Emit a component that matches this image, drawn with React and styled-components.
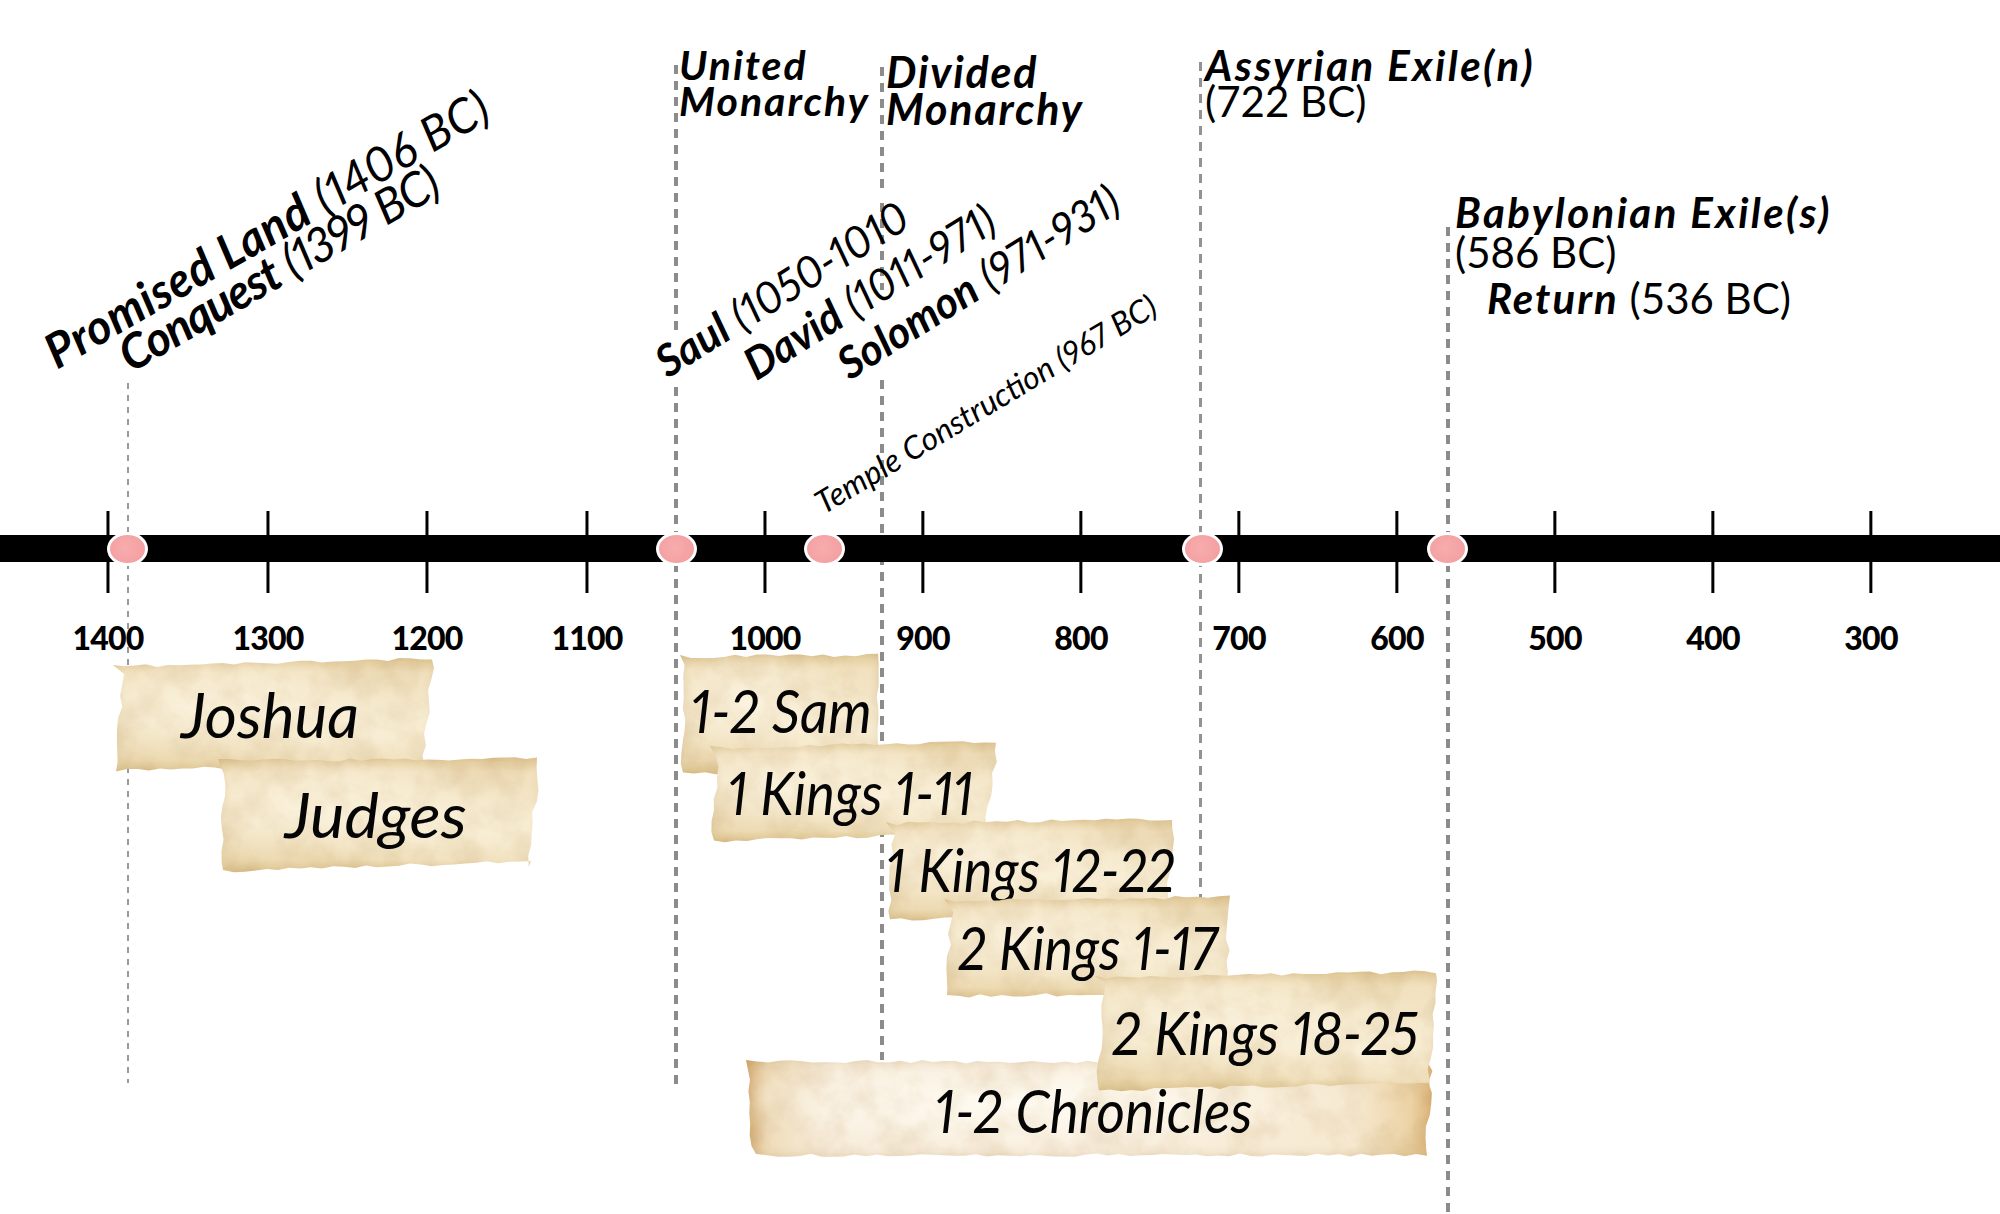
import React from "react";
import styled, { createGlobalStyle } from "styled-components";

const GlobalStyle = createGlobalStyle`
  html, body {
    margin: 0;
    padding: 0;
    background: #fff;
  }
  body {
    font-family: "Lato", "Open Sans", sans-serif;
    color: #000;
  }
`;

const Canvas = styled.div`
  position: relative;
  width: 2000px;
  height: 1214px;
  overflow: hidden;
  background: #fff;
`;

const Guide = styled.div`
  position: absolute;
  left: ${(p) => p.$x - p.$w / 2}px;
  top: ${(p) => p.$from}px;
  width: ${(p) => p.$w}px;
  height: ${(p) => p.$to - p.$from}px;
  background: repeating-linear-gradient(
    to bottom,
    ${(p) => p.$color} 0 ${(p) => p.$dash}px,
    transparent ${(p) => p.$dash}px ${(p) => p.$dash + p.$gap}px
  );
`;

const AxisBar = styled.div`
  position: absolute;
  left: 0;
  right: 0;
  top: 535px;
  height: 27px;
  background: #000;
`;

const Tick = styled.div`
  position: absolute;
  left: ${(p) => p.$x}px;
  top: 511px;
  transform: translateX(-50%);
  display: flex;
  flex-direction: column;
  align-items: center;
`;

const TickMark = styled.span`
  width: 3px;
  height: 82px;
  background: #000;
`;

const TickLabel = styled.span`
  margin-top: 29px;
  font-family: "Lato", sans-serif;
  font-weight: 900;
  font-size: 32px;
  line-height: 32px;
  letter-spacing: -0.8px;
`;

const EventDot = styled.span`
  position: absolute;
  left: ${(p) => p.$x - 20.5}px;
  top: 531.5px;
  width: 35px;
  height: 28px;
  border: 3px solid #fff;
  border-radius: 50%;
  background: radial-gradient(circle at 45% 45%, #f8acad, #f29c9e);
`;

const EraLabel = styled.div`
  position: absolute;
  left: ${(p) => p.$x}px;
  top: ${(p) => p.$y}px;
  font-family: "Lato", sans-serif;
  font-size: ${(p) => p.$size}px;
  line-height: ${(p) => p.$lh}px;
  white-space: nowrap;
`;

const EraLine = styled.div`
  padding-left: ${(p) => p.$indent || 0}px;
  margin-top: ${(p) => p.$gap || 0}px;
`;

const Strong = styled.span`
  font-weight: 700;
  font-style: italic;
  letter-spacing: ${(p) => p.$track ?? 2}px;
`;

const Plain = styled.span`
  font-weight: 400;
  font-style: normal;
`;

const DiagonalNote = styled.div`
  position: absolute;
  left: ${(p) => p.$x}px;
  top: ${(p) => p.$y}px;
  transform: rotate(${(p) => p.$angle}deg) scaleX(${(p) => p.$squeeze || 1});
  transform-origin: 0 0;
  font-family: "Lato", sans-serif;
  font-size: ${(p) => p.$size}px;
  line-height: ${(p) => p.$lh}px;
  font-variant-numeric: proportional-nums;
  white-space: nowrap;
`;

const NoteLine = styled.div`
  padding-left: ${(p) => p.$indent || 0}px;
  letter-spacing: ${(p) => p.$track || 0}px;
`;

const NoteName = styled.span`
  font-weight: 700;
  font-style: italic;
`;

const NoteDate = styled.span`
  font-weight: ${(p) => p.$weight || 400};
  font-style: italic;
`;

const Paper = styled.div`
  position: absolute;
  left: ${(p) => p.$x}px;
  top: ${(p) => p.$y}px;
  width: ${(p) => p.$w}px;
  height: ${(p) => p.$h}px;
  display: flex;
  align-items: center;
  justify-content: center;
`;

const Sheet = styled.div`
  position: absolute;
  inset: 0;
  clip-path: ${(p) => p.$clip};
  background: ${(p) =>
    p.$light
      ? `radial-gradient(ellipse at 40% 45%, rgba(255, 252, 244, 0.9), transparent 55%),
         linear-gradient(90deg, #d9b27a 0%, #efdcba 3%, #f8eedd 12%, #faf1e2 50%, #f6e9d0 88%, #ecd3a6 96%, #d7ab6d 100%)`
      : `radial-gradient(ellipse at 35% 40%, rgba(253, 246, 228, 0.85), transparent 55%),
         radial-gradient(ellipse at 78% 65%, rgba(252, 244, 224, 0.7), transparent 45%),
         linear-gradient(180deg, #e6cf9f 0%, #f1e1bf 14%, #f3e6c8 55%, #eddbb4 88%, #e2c995 100%)`};
  box-shadow: inset 0 0 12px rgba(170, 125, 60, 0.3);
`;

const Grain = styled.svg`
  position: absolute;
  inset: 0;
  width: 100%;
  height: 100%;
  mix-blend-mode: multiply;
  opacity: 0.45;
`;

const PaperText = styled.span`
  position: relative;
  display: inline-block;
  margin-left: ${(p) => p.$dx || 0}px;
  margin-top: ${(p) => p.$dy || 0}px;
  font-family: "Lato", sans-serif;
  font-style: italic;
  font-weight: 400;
  font-size: ${(p) => p.$size}px;
  line-height: 1;
  font-variant-numeric: proportional-nums;
  white-space: nowrap;
  color: #050505;
  transform: scaleX(${(p) => p.$squeeze || 1});
`;

const HiddenDefs = styled.svg`
  position: absolute;
  width: 0;
  height: 0;
`;

function rng(seed) {
  let s = seed % 2147483647;
  if (s <= 0) s += 2147483646;
  return () => {
    s = (s * 16807) % 2147483647;
    return (s - 1) / 2147483646;
  };
}

// ragged outline for a torn strip of paper
function tornClip(seed, w, h, c) {
  const r = rng(seed);
  const pts = [];
  const step = 11;
  for (let x = 0; x <= w; x += step) {
    const t = x / w;
    const dy = c.tl[1] + (c.tr[1] - c.tl[1]) * t;
    pts.push([x, dy + r() * 3.5]);
  }
  for (let y = step; y <= h; y += step) {
    const t = y / h;
    const dx = c.tr[0] + (c.br[0] - c.tr[0]) * t;
    pts.push([w - dx - r() * 4.5, y]);
  }
  for (let x = w - step; x >= 0; x -= step) {
    const t = x / w;
    const dy = c.bl[1] + (c.br[1] - c.bl[1]) * t;
    pts.push([x, h - dy - r() * 3.5]);
  }
  for (let y = h - step; y >= step; y -= step) {
    const t = y / h;
    const dx = c.tl[0] + (c.bl[0] - c.tl[0]) * t;
    pts.push([dx + r() * 4.5, y]);
  }
  return `polygon(${pts.map(([x, y]) => `${x.toFixed(1)}px ${y.toFixed(1)}px`).join(", ")})`;
}

const TICKS = [
  [108, 1400], [268, 1300], [427, 1200], [587, 1100], [765, 1000], [923, 900],
  [1081, 800], [1239, 700], [1397, 600], [1555, 500], [1713, 400], [1871, 300],
];

const DOTS = [127, 676, 824, 1202, 1447];

const GUIDES = [
  { x: 128, segs: [[383, 1083]], w: 2, dash: 6, gap: 6, color: "#9a9a9a" },
  { x: 676, segs: [[65, 333], [387, 1084]], w: 4, dash: 9, gap: 7, color: "#8c8c8c" },
  { x: 882, segs: [[67, 193], [203, 290], [380, 1060]], w: 4, dash: 9, gap: 7, color: "#8c8c8c" },
  { x: 1200, segs: [[62, 1060]], w: 3, dash: 9, gap: 7, color: "#939393" },
  { x: 1448, segs: [[227, 1214]], w: 4, dash: 9, gap: 7, color: "#8c8c8c" },
];

const PAPERS = [
  { text: "Joshua", x: 113, y: 657, w: 322, h: 116, size: 62, squeeze: 1, dx: -8, dy: -2, seed: 11,
    c: { tl: [10, 8], tr: [0, 0], br: [10, 10], bl: [0, 0] } },
  { text: "Judges", x: 218, y: 757, w: 324, h: 116, size: 62, squeeze: 1.05, dx: -9, dy: -3, seed: 23,
    c: { tl: [6, 2], tr: [0, 0], br: [12, 10], bl: [0, 0] } },
  { text: "1-2 Sam", x: 680, y: 653, w: 201, h: 122, size: 60, squeeze: 0.92, dx: 2, dy: -8, seed: 37,
    c: { tl: [4, 2], tr: [0, 0], br: [2, 2], bl: [0, 0] } },
  { text: "1 Kings 1-11", x: 710, y: 740, w: 290, h: 103, size: 60, squeeze: 0.9, dx: -9, dy: 0, seed: 41,
    c: { tl: [6, 6], tr: [0, 0], br: [14, 8], bl: [0, 0] } },
  { text: "1 Kings 12-22", x: 886, y: 817, w: 290, h: 105, size: 60, squeeze: 0.895, dx: 0, dy: -2, seed: 53,
    c: { tl: [6, 5], tr: [0, 0], br: [8, 8], bl: [0, 0] } },
  { text: "2 Kings 1-17", x: 944, y: 895, w: 289, h: 105, size: 60, squeeze: 0.895, dx: -2, dy: -2, seed: 67,
    c: { tl: [6, 4], tr: [0, 0], br: [6, 6], bl: [0, 2] } },
  { text: "1-2 Chronicles", x: 746, y: 1060, w: 692, h: 97, size: 60, squeeze: 0.915, dx: 3, dy: 2, seed: 79, light: true,
    c: { tl: [0, 0], tr: [4, 0], br: [10, 0], bl: [2, 0] } },
  { text: "2 Kings 18-25", x: 1095, y: 970, w: 345, h: 123, size: 60, squeeze: 0.92, dx: -4, dy: 0, seed: 97,
    c: { tl: [8, 6], tr: [0, 0], br: [10, 10], bl: [0, 0] } },
];

const TornPaper = ({ p }) => (
  <Paper $x={p.x} $y={p.y} $w={p.w} $h={p.h}>
    <Sheet $clip={tornClip(p.seed, p.w, p.h, p.c)} $light={p.light}>
      <Grain>
        <rect width="100%" height="100%" filter="url(#paperGrain)" />
      </Grain>
    </Sheet>
    <PaperText $size={p.size} $squeeze={p.squeeze} $dx={p.dx} $dy={p.dy}>
      {p.text}
    </PaperText>
  </Paper>
);

export default function App() {
  return (
    <>
      <GlobalStyle />
      <Canvas>
        <HiddenDefs aria-hidden="true">
          <defs>
            <filter id="paperGrain" x="0" y="0" width="100%" height="100%">
              <feTurbulence type="fractalNoise" baseFrequency="0.03" numOctaves="4" seed="7" />
              <feColorMatrix
                type="matrix"
                values="0 0 0 0 0.62  0 0 0 0 0.46  0 0 0 0 0.24  1.1 0 0 0 -0.42"
              />
            </filter>
          </defs>
        </HiddenDefs>

        {GUIDES.flatMap((g) =>
          g.segs.map(([from, to]) => (
            <Guide
              key={`${g.x}-${from}`}
              $x={g.x}
              $from={from}
              $to={to}
              $w={g.w}
              $dash={g.dash}
              $gap={g.gap}
              $color={g.color}
            />
          ))
        )}

        {TICKS.map(([x, year]) => (
          <Tick key={year} $x={x}>
            <TickMark />
            <TickLabel>{year}</TickLabel>
          </Tick>
        ))}
        <AxisBar />
        {DOTS.map((x) => (
          <EventDot key={x} $x={x} />
        ))}

        <DiagonalNote $x={38} $y={337} $angle={-30} $size={48} $lh={40} $squeeze={0.975}>
          <NoteLine $track={0.6}>
            <NoteName>Promised Land</NoteName> <NoteDate>(1406 BC)</NoteDate>
          </NoteLine>
          <NoteLine $indent={64} $track={-1.2}>
            <NoteName>Conquest</NoteName> <NoteDate>(1399 BC)</NoteDate>
          </NoteLine>
        </DiagonalNote>

        <DiagonalNote $x={646} $y={344} $angle={-32} $size={44} $lh={49} $squeeze={0.97}>
          <NoteLine>
            <NoteName>Saul</NoteName> <NoteDate>(1050-1010</NoteDate>
          </NoteLine>
          <NoteLine $indent={76}>
            <NoteName>David</NoteName> <NoteDate>(1011-971)</NoteDate>
          </NoteLine>
          <NoteLine $indent={158}>
            <NoteName>Solomon</NoteName> <NoteDate>(971-931)</NoteDate>
          </NoteLine>
        </DiagonalNote>

        <DiagonalNote $x={809} $y={491} $angle={-31} $size={32} $lh={32}>
          <NoteLine>
            <NoteDate $weight={400}>Temple Construction (967 BC)</NoteDate>
          </NoteLine>
        </DiagonalNote>

        <EraLabel $x={679} $y={47} $size={41} $lh={36}>
          <EraLine><Strong>United</Strong></EraLine>
          <EraLine><Strong>Monarchy</Strong></EraLine>
        </EraLabel>

        <EraLabel $x={886} $y={53} $size={43} $lh={37}>
          <EraLine><Strong $track={1.8}>Divided</Strong></EraLine>
          <EraLine><Strong $track={1.8}>Monarchy</Strong></EraLine>
        </EraLabel>

        <EraLabel $x={1205} $y={47} $size={42} $lh={36}>
          <EraLine><Strong $track={2.4}>Assyrian Exile(n)</Strong></EraLine>
          <EraLine><Plain>(722 BC)</Plain></EraLine>
        </EraLabel>

        <EraLabel $x={1455} $y={192} $size={42} $lh={40}>
          <EraLine><Strong $track={2.4}>Babylonian Exile(s)</Strong></EraLine>
          <EraLine><Plain>(586 BC)</Plain></EraLine>
          <EraLine $indent={32} $gap={6}>
            <Strong $track={2}>Return</Strong> <Plain>(536 BC)</Plain>
          </EraLine>
        </EraLabel>

        {PAPERS.map((p) => (
          <TornPaper key={p.text} p={p} />
        ))}
      </Canvas>
    </>
  );
}
